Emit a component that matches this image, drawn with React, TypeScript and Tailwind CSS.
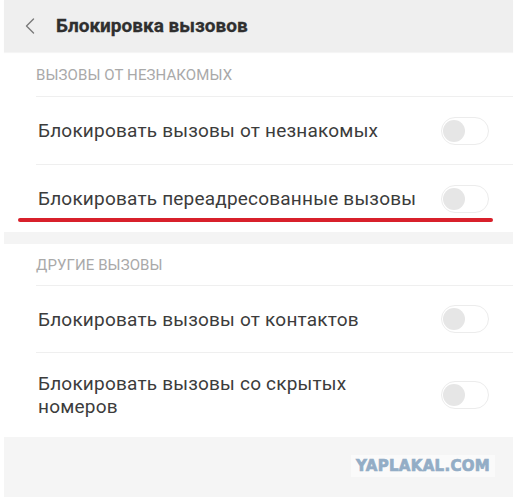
import React from 'react';

type RowProps = {
  label: React.ReactNode;
  height: string;
  divider?: boolean;
};

function Toggle() {
  return (
    <div className="flex h-[28px] w-[48px] shrink-0 items-center rounded-full border border-[#ececec] bg-white px-[1px]">
      <div className="h-[22px] w-[22px] rounded-full bg-[#e6e6e6]" />
    </div>
  );
}

function Row({ label, height, divider }: RowProps) {
  return (
    <div className={`flex items-center ${height} pr-[24px] ${divider ? 'border-b border-[#efefef]' : ''}`}>
      <div className="flex-1 pl-[2px] text-[19px] leading-[23px] tracking-[0.2px] text-[#3c3c3c]">{label}</div>
      <Toggle />
    </div>
  );
}

function SectionLabel({ children, height }: { children: React.ReactNode; height: string }) {
  return (
    <div className={`flex items-center ${height} border-b border-[#efefef] pt-[2px] text-[15px] tracking-[0.1px] text-[#a9a9a9]`}>
      {children}
    </div>
  );
}

export default function App() {
  return (
    <div className="h-[497px] w-[515px] overflow-hidden bg-white pl-[4px] pr-[2px] font-['Roboto','Noto_Sans',sans-serif]">
      {/* top bar */}
      <div className="flex h-[52px] items-center bg-[#efefef] shadow-[0_1px_1px_rgba(0,0,0,0.04)]">
        <svg className="ml-[21px] h-[16px] w-[10px]" viewBox="0 0 10 16" fill="none">
          <path d="M8.5 1 L1.5 8 L8.5 15" stroke="#7a7a7a" strokeWidth="1.4" strokeLinecap="round" strokeLinejoin="round" />
        </svg>
        <h1 className="ml-[21px] text-[19px] font-bold text-[#2f2f2f] [-webkit-text-stroke:0.3px_#2f2f2f]">Блокировка вызовов</h1>
      </div>

      {/* unknown numbers */}
      <div className="relative pl-[32px]">
        <SectionLabel height="h-[45px]">ВЫЗОВЫ ОТ НЕЗНАКОМЫХ</SectionLabel>
        <Row label="Блокировать вызовы от незнакомых" height="h-[68px]" divider />
        <Row label="Блокировать переадресованные вызовы" height="h-[67px]" />
        <div className="absolute left-[14px] top-[166px] h-[4px] w-[475px] rounded-full bg-[#d8202b]" />
      </div>

      <div className="h-[12px] bg-[#f4f4f4]" />

      {/* other calls */}
      <div className="pl-[32px]">
        <SectionLabel height="h-[42px]">ДРУГИЕ ВЫЗОВЫ</SectionLabel>
        <Row label="Блокировать вызовы от контактов" height="h-[67px]" divider />
        <Row
          label={
            <>
              Блокировать вызовы со скрытых
              <br />
              номеров
            </>
          }
          height="h-[84px]"
        />
      </div>

      <div className="relative h-[60px] bg-[#f5f5f5]">
        <div className="absolute right-[18px] top-[18px] bg-[#fafafa] px-[5px] py-[3px] font-['DejaVu_Sans',sans-serif] text-[15px] font-black leading-[16px] tracking-[0.3px] text-[#93adc6] [-webkit-text-stroke:0.7px_#93adc6]">
          YAPLAKAL.COM
        </div>
      </div>
    </div>
  );
}
